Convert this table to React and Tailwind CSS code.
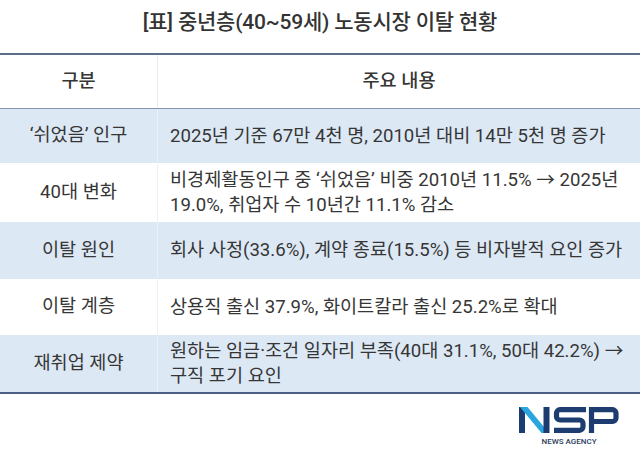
import React from 'react';

const rows = [
  { label: '‘쉬었음’ 인구', lines: ['2025년 기준 67만 4천 명, 2010년 대비 14만 5천 명 증가'], h: 'h-[54px]', blue: true },
  { label: '40대 변화', lines: ['비경제활동인구 중 ‘쉬었음’ 비중 2010년 11.5% → 2025년', '19.0%, 취업자 수 10년간 11.1% 감소'], h: 'h-[59px]', blue: false },
  { label: '이탈 원인', lines: ['회사 사정(33.6%), 계약 종료(15.5%) 등 비자발적 요인 증가'], h: 'h-[57px]', blue: true },
  { label: '이탈 계층', lines: ['상용직 출신 37.9%, 화이트칼라 출신 25.2%로 확대'], h: 'h-[56px]', blue: false },
  { label: '재취업 제약', lines: ['원하는 임금·조건 일자리 부족(40대 31.1%, 50대 42.2%) →', '구직 포기 요인'], h: 'h-[57px]', blue: true },
];

const NspLogo = () => (
  <svg width="100" height="26" viewBox="0 0 100 26">
    <rect x="0" y="0" width="6" height="26" fill="#1d3c70" />
    <polygon points="1,0 8.5,0 30,26 22.5,26" fill="#2aa5df" />
    <rect x="24.5" y="0" width="6" height="26" fill="#1d3c70" />
    <path d="M67 2.7 H41 a3.5 3.5 0 0 0 -3.5 3.5 V9.5 a3.5 3.5 0 0 0 3.5 3.5 H60.5 a3.5 3.5 0 0 1 3.5 3.5 V19.8 a3.5 3.5 0 0 1 -3.5 3.5 H35" fill="none" stroke="#1d3c70" strokeWidth="5.2" />
    <path d="M72.5 26 V2.7 H93.5 a3.5 3.5 0 0 1 3.5 3.5 V11 a3.5 3.5 0 0 1 -3.5 3.5 H72.5" fill="none" stroke="#1d3c70" strokeWidth="5.2" />
  </svg>
);

export default function App() {
  return (
    <div className="w-[640px] h-[453px] bg-white text-[#363636] font-['Roboto','Noto_Sans_CJK_KR',sans-serif] overflow-hidden">
      <h1 className="h-[53px] pb-[8px] flex items-center justify-center text-[21px] font-medium tracking-[-0.2px] text-[#333]">
        [표] 중년층(40~59세) 노동시장 이탈 현황
      </h1>

      <div className="border-t-2 border-b-2 border-t-[#5d6f86] border-b-[#4a6087]">
        <div className="grid grid-cols-[158px_1fr] h-[54px] border-b border-[#8596ab] text-[18.6px] font-medium">
          <div className="flex items-center justify-center border-r border-[#ececec]">구분</div>
          <div className="flex items-center justify-center">주요 내용</div>
        </div>

        {rows.map((r) => (
          <div key={r.label} className={`grid grid-cols-[158px_1fr] ${r.h} ${r.blue ? 'bg-[#dde8f5]' : 'bg-white'} text-[18.6px]`}>
            <div className={`flex items-center justify-center border-r ${r.blue ? 'border-[#e9f0f8]' : 'border-[#f0f0f0]'}`}>
              {r.label}
            </div>
            <div className="flex flex-col justify-center pl-[12px] leading-[25px] whitespace-nowrap">
              {r.lines.map((l) => (
                <div key={l}>{l}</div>
              ))}
            </div>
          </div>
        ))}
      </div>

      <div className="flex justify-end pr-[21px] pt-[13px]">
        <div className="flex flex-col items-center">
          <NspLogo />
          <div className="mt-[4px] text-[8px] leading-[9px] font-['Roboto',sans-serif] text-[#2b3e5c] font-medium">
            NEWS AGENCY
          </div>
        </div>
      </div>
    </div>
  );
}
